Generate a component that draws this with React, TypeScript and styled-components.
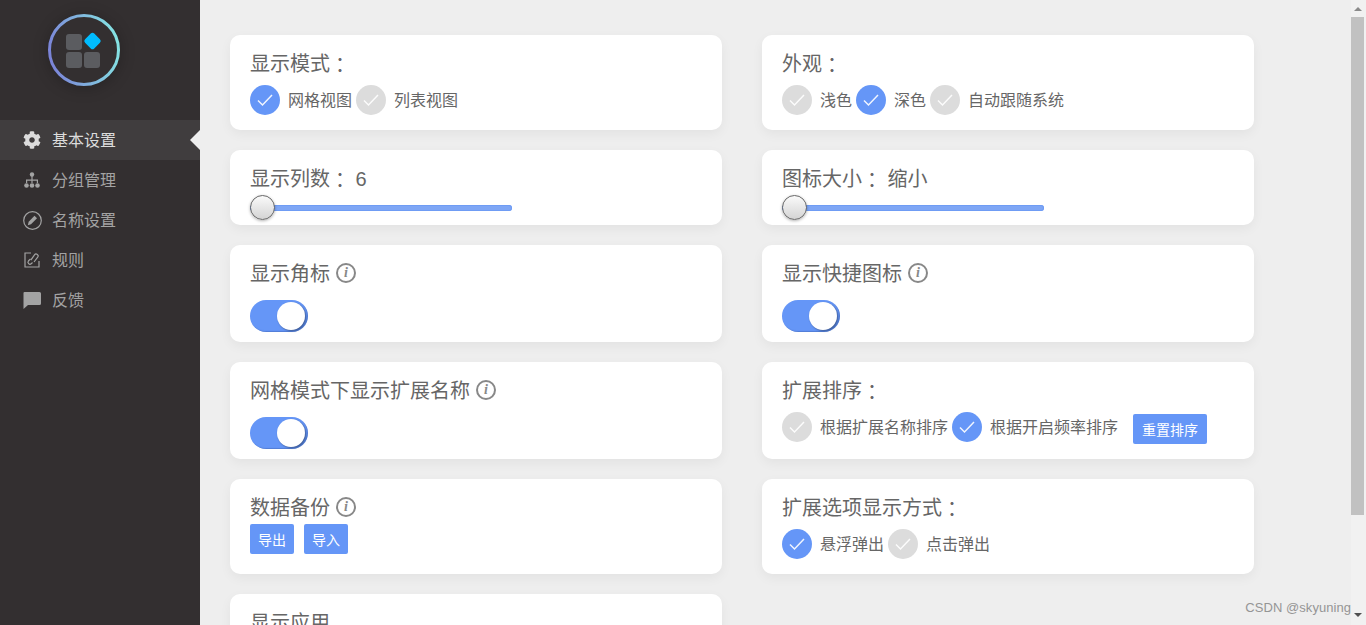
import * as React from "react";
import styled, { createGlobalStyle } from "styled-components";
import { FaCog } from "react-icons/fa";

const GlobalStyle = createGlobalStyle`
  html, body {
    margin: 0;
    padding: 0;
    height: 625px;
    overflow: hidden;
    background: #eee;
    font-family: "Liberation Sans", "Noto Sans CJK SC", sans-serif;
  }
`;

const Page = styled.div`
  position: relative;
  display: flex;
  width: 1366px;
  height: 625px;
  overflow: hidden;
`;

const Sidebar = styled.aside`
  flex: 0 0 200px;
  background: #332f30;
  padding-top: 14px;
  box-sizing: border-box;
`;

const LogoWrap = styled.div`
  display: flex;
  justify-content: flex-start;
  padding-left: 48px;
  margin-bottom: 34px;
`;

const Menu = styled.ul`
  list-style: none;
  margin: 0;
  padding: 0;
`;

const MenuItem = styled.li<{ $active?: boolean }>`
  position: relative;
  display: flex;
  align-items: center;
  box-sizing: border-box;
  height: 40px;
  padding: 0 0 2px 22px;
  font-size: 16px;
  color: ${(p) => (p.$active ? "#dcdcdc" : "#a3a3a3")};
  background: ${(p) => (p.$active ? "#403d3e" : "transparent")};

  ${(p) =>
    p.$active &&
    `&::after {
      content: "";
      position: absolute;
      right: 0;
      top: 10px;
      border-style: solid;
      border-width: 10px 10px 10px 0;
      border-color: transparent #eee transparent transparent;
    }`}
`;

const MenuIcon = styled.span`
  display: flex;
  align-items: center;
  justify-content: center;
  width: 20px;
  height: 20px;
  margin: 2px 10px 0 0;
`;

const Main = styled.main`
  flex: 1;
  display: grid;
  grid-template-columns: 492px 492px;
  column-gap: 40px;
  row-gap: 20px;
  align-content: start;
  padding: 35px 0 0 30px;
`;

const Card = styled.section<{ $height: number }>`
  box-sizing: border-box;
  height: ${(p) => p.$height}px;
  padding: 16px 20px 0;
  background: #fff;
  border-radius: 10px;
  box-shadow: 0 4px 12px rgba(0, 0, 0, 0.05);
  color: #666;
`;

const Title = styled.div`
  display: flex;
  align-items: center;
  height: 27px;
  font-size: 20px;
  line-height: 27px;
  white-space: pre;
`;

/* full-width colon sits centred in the reference, the TC face draws it that way */
const Colon = styled.span`
  font-family: "Noto Sans CJK TC", sans-serif;
`;

const Row = styled.div<{ $top?: number }>`
  display: flex;
  align-items: center;
  height: 30px;
  margin-top: ${(p) => p.$top ?? 7}px;
`;

const Radio = styled.span<{ $on?: boolean }>`
  display: flex;
  align-items: center;
  justify-content: center;
  width: 30px;
  height: 30px;
  border-radius: 50%;
  background: ${(p) => (p.$on ? "#6596f7" : "#dcdcdc")};
`;

const RadioLabel = styled.span`
  margin: 0 4px 2px 8px;
  font-size: 16px;
  color: #666;
`;

const Button = styled.button<{ $left?: number }>`
  width: 44px;
  height: 30px;
  margin: 0 10px 0 ${(p) => p.$left ?? 0}px;
  padding: 0;
  border: none;
  border-radius: 2px;
  background: #6596f7;
  color: #fff;
  font: 14px "Liberation Sans", "Noto Sans CJK SC", sans-serif;
`;

const WideButton = styled(Button)`
  width: 74px;
  transform: translateY(2px);
`;

const Slider = styled.div`
  position: relative;
  width: 262px;
  height: 6px;
  margin-top: 12px;
  border-radius: 3px;
  background: #7ea6f5;
  box-shadow: inset 0 0 0 1px #6f9cf4;
`;

const Thumb = styled.span`
  position: absolute;
  left: 0;
  top: -10px;
  box-sizing: border-box;
  width: 25px;
  height: 25px;
  border-radius: 50%;
  border: 1px solid #666;
  background: linear-gradient(#fafafa, #d4d4d4);
  box-shadow: 0 1px 3px rgba(0, 0, 0, 0.3);
`;

const Toggle = styled.div`
  position: relative;
  width: 58px;
  height: 32px;
  margin-top: 12px;
  border-radius: 16px;
  background: #6596f7;
  box-shadow: inset -1px -1px 1px rgba(40, 70, 140, 0.3);
`;

const Knob = styled.span`
  position: absolute;
  right: 3px;
  top: 2px;
  width: 28px;
  height: 28px;
  border-radius: 50%;
  background: #fff;
  box-shadow: 1px 1px 2px rgba(0, 0, 0, 0.4);
`;

const InfoMark = styled.span`
  display: inline-flex;
  align-items: center;
  justify-content: center;
  box-sizing: border-box;
  width: 20px;
  height: 20px;
  margin: 0 0 4px 6px;
  border: 2px solid #888;
  border-radius: 50%;
  color: #888;
  font: italic bold 14px "Liberation Serif", serif;
`;

const Scrollbar = styled.div`
  position: absolute;
  top: 0;
  right: 0;
  bottom: 0;
  width: 15px;
  padding-top: 17px;
  box-sizing: border-box;
  background: #f1f1f1;
`;

const ScrollThumb = styled.div`
  width: 13px;
  height: 498px;
  background: #c1c1c1;
`;

const ScrollUp = styled.span`
  position: absolute;
  top: 7px;
  left: 3px;
  border-style: solid;
  border-width: 0 4px 4px;
  border-color: transparent transparent #8a8a8a;
`;

const ScrollDown = styled.span`
  position: absolute;
  bottom: 8px;
  left: 3px;
  border-style: solid;
  border-width: 4px 4px 0;
  border-color: #505050 transparent transparent;
`;

const Watermark = styled.div`
  position: absolute;
  right: 15px;
  bottom: 9px;
  font-size: 13px;
  line-height: 16px;
  color: #959595;
  letter-spacing: 0.05px;
`;

const Check: React.FC = () => (
  <svg width="18" height="14" viewBox="0 0 18 14" fill="none">
    <path d="M2 7.5 L6.5 12 L16 2" stroke="#fff" strokeOpacity="0.9" strokeWidth="1.5" />
  </svg>
);

const Logo: React.FC = () => (
  <svg width="72" height="72" viewBox="0 0 72 72" style={{ overflow: "visible" }}>
    <defs>
      <linearGradient id="ring" x1="0" y1="0.6" x2="1" y2="0.4">
        <stop offset="0" stopColor="#7b83d8" />
        <stop offset="1" stopColor="#85e3e3" />
      </linearGradient>
      <filter id="glow" x="-40%" y="-40%" width="180%" height="180%">
        <feGaussianBlur stdDeviation="8" />
      </filter>
    </defs>
    <circle cx="36" cy="38" r="36" fill="#000" opacity="0.25" filter="url(#glow)" />
    <circle cx="36" cy="36" r="34.5" fill="#332f30" stroke="url(#ring)" strokeWidth="3" />
    <rect x="18" y="20" width="16" height="16" rx="3" fill="#5b5c60" />
    <rect x="18" y="38" width="16" height="16" rx="3" fill="#5b5c60" />
    <rect x="36" y="38" width="16" height="16" rx="3" fill="#5b5c60" />
    <rect x="38" y="20.500" width="13" height="13" rx="2.500" fill="#00bcff" transform="rotate(45 44.500 27)" />
  </svg>
);

const GroupIcon: React.FC = () => (
  <svg width="16" height="16" viewBox="0 0 16 16" fill="#a3a3a3">
    <circle cx="8" cy="2.500" r="2.200" />
    <path d="M7.400 4 H8.600 V7.500 H14 V11 H12.800 V8.700 H8.600 V11 H7.400 V8.700 H3.200 V11 H2 V7.500 H7.400 Z" />
    <circle cx="2.500" cy="13.500" r="2.300" />
    <circle cx="8" cy="13.500" r="2.300" />
    <circle cx="13.500" cy="13.500" r="2.300" />
  </svg>
);

const PencilIcon: React.FC = () => (
  <svg width="19" height="19" viewBox="0 0 19 19" fill="none">
    <circle cx="9.500" cy="9.500" r="8.800" stroke="#a3a3a3" strokeWidth="1.200" />
    <path d="M11.500 4.800 L14 7.300 L8 13.300 L4.800 14.200 L5.700 10.800 Z" fill="#a3a3a3" />
  </svg>
);

const RuleIcon: React.FC = () => (
  <svg width="16" height="16" viewBox="0 0 16 16" fill="none" stroke="#a3a3a3" strokeWidth="1.200">
    <path d="M7 1 H1 V15 H15 V9" />
    <path d="M8.500 10.500 L7.200 11.800 a2 2 0 0 1 -2.800 -2.800 L6.500 6.900" />
    <path d="M6.800 8.200 L10.500 2.800 a2 2 0 0 1 3.200 2.400 L10 10" />
  </svg>
);

const FeedbackIcon: React.FC = () => (
  <svg width="18" height="17" viewBox="0 0 18 17" fill="#a3a3a3">
    <path d="M1.500 0 H16.500 A1.500 1.500 0 0 1 18 1.500 V11.500 A1.500 1.500 0 0 1 16.500 13 H5 L0.500 17 V1 A1 1 0 0 1 1.500 0 Z" />
  </svg>
);

const Choice: React.FC<{ on?: boolean; label: string }> = ({ on, label }) => (
  <>
    <Radio $on={on}>
      <Check />
    </Radio>
    <RadioLabel>{label}</RadioLabel>
  </>
);

const Info: React.FC = () => <InfoMark>i</InfoMark>;

const App: React.FC = () => (
  <Page>
    <GlobalStyle />
    <Sidebar>
      <LogoWrap>
        <Logo />
      </LogoWrap>
      <Menu>
        <MenuItem $active>
          <MenuIcon><FaCog size={18} color="#dcdcdc" /></MenuIcon>
          基本设置
        </MenuItem>
        <MenuItem>
          <MenuIcon><GroupIcon /></MenuIcon>
          分组管理
        </MenuItem>
        <MenuItem>
          <MenuIcon><PencilIcon /></MenuIcon>
          名称设置
        </MenuItem>
        <MenuItem>
          <MenuIcon><RuleIcon /></MenuIcon>
          规则
        </MenuItem>
        <MenuItem>
          <MenuIcon><FeedbackIcon /></MenuIcon>
          反馈
        </MenuItem>
      </Menu>
    </Sidebar>
    <Main>
      <Card $height={95}>
        <Title>显示模式<Colon>：</Colon></Title>
        <Row>
          <Choice on label="网格视图" />
          <Choice label="列表视图" />
        </Row>
      </Card>
      <Card $height={95}>
        <Title>外观<Colon>：</Colon></Title>
        <Row>
          <Choice label="浅色" />
          <Choice on label="深色" />
          <Choice label="自动跟随系统" />
        </Row>
      </Card>
      <Card $height={75}>
        <Title>显示列数<Colon>：</Colon> 6</Title>
        <Slider><Thumb /></Slider>
      </Card>
      <Card $height={75}>
        <Title>图标大小<Colon>：</Colon> 缩小</Title>
        <Slider><Thumb /></Slider>
      </Card>
      <Card $height={97}>
        <Title>显示角标<Info /></Title>
        <Toggle><Knob /></Toggle>
      </Card>
      <Card $height={97}>
        <Title>显示快捷图标<Info /></Title>
        <Toggle><Knob /></Toggle>
      </Card>
      <Card $height={97}>
        <Title>网格模式下显示扩展名称<Info /></Title>
        <Toggle><Knob /></Toggle>
      </Card>
      <Card $height={97}>
        <Title>扩展排序<Colon>：</Colon></Title>
        <Row>
          <Choice label="根据扩展名称排序" />
          <Choice on label="根据开启频率排序" />
          <WideButton $left={11}>重置排序</WideButton>
        </Row>
      </Card>
      <Card $height={95}>
        <Title>数据备份<Info /></Title>
        <Row $top={2}>
          <Button>导出</Button>
          <Button>导入</Button>
        </Row>
      </Card>
      <Card $height={95}>
        <Title>扩展选项显示方式<Colon>：</Colon></Title>
        <Row>
          <Choice on label="悬浮弹出" />
          <Choice label="点击弹出" />
        </Row>
      </Card>
      <Card $height={95}>
        <Title>显示应用</Title>
      </Card>
    </Main>
    <Scrollbar>
      <ScrollUp />
      <ScrollThumb />
      <ScrollDown />
    </Scrollbar>
    <Watermark>CSDN @skyuning</Watermark>
  </Page>
);

export default App;
